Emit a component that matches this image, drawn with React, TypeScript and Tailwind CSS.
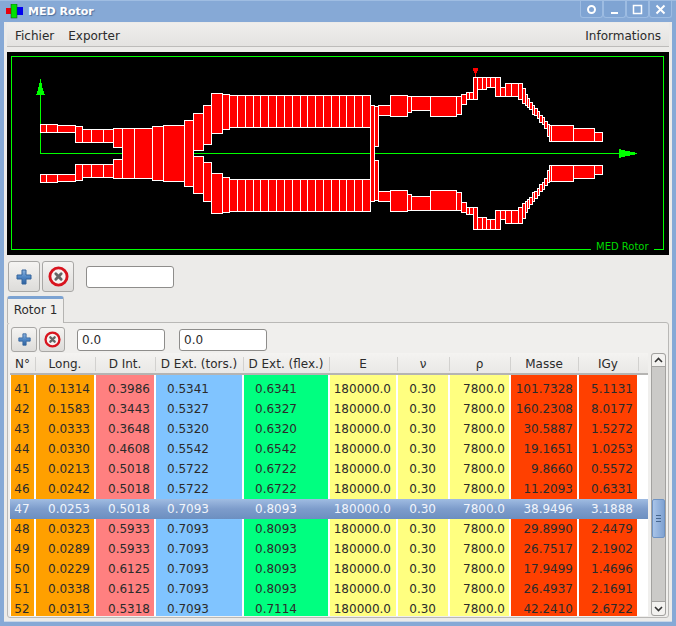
import React from "react";

// [x0, x1, rOut, rIn] one half of each rotor section, mirrored round the axis
const sections: number[][] = [
  [40, 46, 29, 21], [46, 57, 29, 21], [57, 75, 28, 21], [75, 82, 27, 11], [82, 91, 24, 11],
  [91, 103, 24, 11], [103, 113, 24, 11], [113, 122, 25, 6], [122, 134, 25, 0], [134, 152, 25, 0],
  [152, 163, 27, 0], [163, 184, 28, 0], [184, 193, 33, 0], [193, 203, 40, 3], [203, 211, 48, 9],
  [211, 222, 60, 20], [222, 229, 59, 24], [229, 237, 58, 26], [237, 245, 58, 26], [245, 253, 58, 26],
  [253, 260, 58, 26], [260, 268, 58, 26], [268, 276, 58, 26], [276, 284, 58, 26], [284, 292, 58, 26],
  [292, 300, 58, 26], [300, 307, 58, 26], [307, 315, 58, 26], [315, 323, 58, 26], [323, 331, 58, 26],
  [331, 339, 58, 26], [339, 346, 58, 26], [346, 354, 58, 26], [354, 362, 58, 26], [362, 370, 58, 26],
  [370, 374, 48, 0], [374, 378, 47, 7], [378, 390, 48, 38], [390, 407, 58, 37], [407, 411, 57, 41],
  [411, 430, 57, 43], [430, 456, 57, 37], [456, 461, 57, 39], [461, 466, 59, 49], [466, 469, 61, 54],
  [469, 473, 61, 54], [473, 477, 76, 54], [477, 482, 76, 64], [482, 486, 76, 64], [486, 490, 76, 66],
  [490, 495, 76, 66], [495, 500, 76, 57], [500, 505, 66, 57], [505, 511, 70, 57], [511, 518, 70, 57],
  [518, 522, 70, 54], [522, 525, 65, 50], [525, 527, 59, 48], [527, 529, 55, 46], [529, 532, 51, 44],
  [532, 534, 48, 39], [534, 537, 45, 38], [537, 539, 42, 35], [539, 542, 38, 31], [542, 544, 36, 29],
  [544, 547, 32, 25], [547, 549, 29, 17], [549, 551, 28, 12], [551, 573, 28, 12], [573, 594, 25, 12],
  [594, 602, 21, 12],
];

type Row = string[];
const rows: Row[] = [
  ["41", "0.1314", "0.3986", "0.5341", "0.6341", "101.7328", "5.1131"],
  ["42", "0.1583", "0.3443", "0.5327", "0.6327", "160.2308", "8.0177"],
  ["43", "0.0333", "0.3648", "0.5320", "0.6320", "30.5887", "1.5272"],
  ["44", "0.0330", "0.4608", "0.5542", "0.6542", "19.1651", "1.0253"],
  ["45", "0.0213", "0.5018", "0.5722", "0.6722", "9.8660", "0.5572"],
  ["46", "0.0242", "0.5018", "0.5722", "0.6722", "11.2093", "0.6331"],
  ["47", "0.0253", "0.5018", "0.7093", "0.8093", "38.9496", "3.1888"],
  ["48", "0.0323", "0.5933", "0.7093", "0.8093", "29.8990", "2.4479"],
  ["49", "0.0289", "0.5933", "0.7093", "0.8093", "26.7517", "2.1902"],
  ["50", "0.0229", "0.6125", "0.7093", "0.8093", "17.9499", "1.4696"],
  ["51", "0.0338", "0.6125", "0.7093", "0.8093", "26.4937", "2.1691"],
  ["52", "0.0313", "0.5318", "0.7093", "0.7114", "42.2410", "2.6722"],
];

const headers = [
  { label: "N°", w: "w-[23px]" },
  { label: "Long.", w: "w-[58px]" },
  { label: "D Int.", w: "w-[58px]" },
  { label: "D Ext. (tors.)", w: "w-[86px]" },
  { label: "D Ext. (flex.)", w: "w-[84px]" },
  { label: "E", w: "w-[66px]" },
  { label: "ν", w: "w-[50px]" },
  { label: "ρ", w: "w-[59px]" },
  { label: "Masse", w: "w-[66px]" },
  { label: "IGy", w: "w-[58px]" },
];

function RotorPlot() {
  const cy = 153.5;
  return (
    <svg viewBox="7 52 662 203" className="block w-[662px] h-[203px] bg-black shrink-0" shapeRendering="crispEdges">
      <path d="M11.5 249.5V56.5H663.5V249.5H654M590.5 249.5H11.5" fill="none" stroke="#00ff00" />
      <path d="M40.5 95V153.5H630" fill="none" stroke="#00ff00" />
      <polygon points="40.5,79 42,85 43,90 45,95 36,95 38,90 39,85" fill="#00ff00" />
      <polygon points="619,149 623,150 627,151 632,152 637,153 637,154 632,155 627,156 623,157 619,158" fill="#00ff00" />
      {sections.map(([x0, x1, ro, ri], i) => {
        const x = x0 + 0.5;
        const w = x1 - x0;
        if (ri === 0) {
          return <rect key={i} x={x} y={cy - ro} width={w} height={ro * 2} fill="#ff0000" stroke="#ffffff" />;
        }
        return (
          <g key={i}>
            <rect x={x} y={cy - ro} width={w} height={ro - ri} fill="#ff0000" stroke="#ffffff" />
            <rect x={x} y={cy + ri} width={w} height={ro - ri} fill="#ff0000" stroke="#ffffff" />
          </g>
        );
      })}
      <polygon points="473,68 478,68 478,71 477,71 477,73 476,73 476,77 475,77 475,73 474,73 474,71 473,71" fill="#ff0000" />
      <text x="596" y="250" fill="#00d800" fontSize="10" fontFamily="DejaVu Sans" shapeRendering="auto">MED Rotor</text>
    </svg>
  );
}

function PlusIcon({ size }: { size: number }) {
  return (
    <svg width={size} height={size} viewBox="0 0 16 16">
      <defs>
        <linearGradient id="plusFill" x1="0" y1="0" x2="0" y2="1">
          <stop offset="0" stopColor="#8fb4de" />
          <stop offset="0.5" stopColor="#4f86c4" />
          <stop offset="1" stopColor="#2e619f" />
        </linearGradient>
      </defs>
      <path d="M6 1H10V6H15V10H10V15H6V10H1V6H6Z" fill="url(#plusFill)" stroke="#34649c" strokeWidth="1" strokeLinejoin="round" />
    </svg>
  );
}

function DeleteIcon({ size }: { size: number }) {
  return (
    <svg width={size} height={size} viewBox="0 0 22 22">
      <circle cx="11" cy="11" r="9" fill="#f6f4f2" stroke="#d8141e" strokeWidth="3" />
      <path d="M8.2 8.2L13.8 13.8M13.8 8.2L8.2 13.8" stroke="#666666" strokeWidth="3" strokeLinecap="round" />
    </svg>
  );
}

function ToolButton({ w, h, children }: { w: string; h: string; children: React.ReactNode }) {
  return (
    <div className={`${w} ${h} flex items-center justify-center rounded-[3px] border border-[#a8a7a5] bg-gradient-to-b from-[#f5f4f2] to-[#dddcda] shrink-0`}>
      {children}
    </div>
  );
}

function WinButton({ children }: { children: React.ReactNode }) {
  return (
    <div className="w-[23px] h-[17px] flex items-center justify-center rounded-b-[3px] border border-t-0 border-[#9dbce2] bg-[#7fa4d3]">
      {children}
    </div>
  );
}

function DataRow({ row, selected }: { row: Row; selected?: boolean }) {
  const text = selected ? "text-[#f2f5fa]" : "text-[#2b2b2b]";
  const c = (bg: string) => (selected ? "" : bg);
  return (
    <div
      className={`flex gap-[2px] pl-[1px] shrink-0 h-[20px] leading-[20px] ${text} ${
        selected ? "bg-gradient-to-b from-[#a0bce2] via-[#7d9ccb] to-[#6c8fc0]" : ""
      }`}
    >
      <div className={`w-[23px] text-center pr-[1px] ${c("bg-[#ffa000]")}`}>{row[0]}</div>
      <div className={`w-[58px] text-right pr-[4px] ${c("bg-[#ffa000]")}`}>{row[1]}</div>
      <div className={`w-[58px] text-right pr-[4px] ${c("bg-[#ff8080]")}`}>{row[2]}</div>
      <div className={`w-[86px] pl-[11px] ${c("bg-[#80c4ff]")}`}>{row[3]}</div>
      <div className={`w-[84px] pl-[11px] ${c("bg-[#00ff80]")}`}>{row[4]}</div>
      <div className={`w-[66px] text-right pr-[5px] ${c("bg-[#ffff80]")}`}>180000.0</div>
      <div className={`w-[50px] text-right pr-[12px] ${c("bg-[#ffff80]")}`}>0.30</div>
      <div className={`w-[59px] text-right pr-[4px] ${c("bg-[#ffff80]")}`}>7800.0</div>
      <div className={`w-[66px] text-right pr-[4px] ${c("bg-[#ff4000]")}`}>{row[5]}</div>
      <div className={`w-[58px] text-right pr-[4px] ${c("bg-[#ff4000]")}`}>{row[6]}</div>
    </div>
  );
}

// the last few pixels of the row scrolled out above 41
function ClippedRow() {
  return (
    <div className="flex gap-[2px] pl-[1px] h-[4px] shrink-0">
      <div className="w-[23px] bg-[#ffa000]" />
      <div className="w-[58px] bg-[#ffa000]" />
      <div className="w-[58px] bg-[#ff8080]" />
      <div className="w-[86px] bg-[#80c4ff]" />
      <div className="w-[84px] bg-[#00ff80]" />
      <div className="w-[66px] bg-[#ffff80]" />
      <div className="w-[50px] bg-[#ffff80]" />
      <div className="w-[59px] bg-[#ffff80]" />
      <div className="w-[66px] bg-[#ff4000]" />
      <div className="w-[58px] bg-[#ff4000]" />
    </div>
  );
}

function Scrollbar() {
  return (
    <div className="w-[15px] h-[263px] flex flex-col rounded-[3px] border border-[#a3a2a0] bg-[#cbcac8] shrink-0">
      <div className="h-[13px] flex items-center justify-center bg-[#f3f2f0] border-b border-[#a3a2a0] rounded-t-[3px] shrink-0">
        <svg width="9" height="6" viewBox="0 0 9 6"><path d="M1 5L4.5 1.5L8 5" fill="none" stroke="#333" strokeWidth="1.6" /></svg>
      </div>
      <div className="flex-1 flex flex-col">
        <div className="h-[132px] shrink-0" />
        <div className="h-[39px] flex flex-col gap-[2px] items-center justify-center rounded-[2px] border border-[#6e93c4] bg-gradient-to-r from-[#a9c4e8] to-[#7fa2d2] shrink-0">
          <div className="w-[5px] h-[1px] bg-[#46678f]" />
          <div className="w-[5px] h-[1px] bg-[#46678f]" />
          <div className="w-[5px] h-[1px] bg-[#46678f]" />
        </div>
      </div>
      <div className="h-[14px] flex items-center justify-center bg-[#f3f2f0] border-t border-[#a3a2a0] rounded-b-[3px] shrink-0">
        <svg width="9" height="6" viewBox="0 0 9 6"><path d="M1 1L4.5 4.5L8 1" fill="none" stroke="#333" strokeWidth="1.6" /></svg>
      </div>
    </div>
  );
}

export default function App() {
  return (
    <div className="w-[676px] h-[626px] flex flex-col bg-[#86a9d6] overflow-hidden font-['DejaVu_Sans',sans-serif] text-[12px] text-[#2b2b2b]">
      {/* title bar */}
      <div className="h-[22px] flex items-start pl-[6px] pr-[4px] shrink-0 border-t border-[#9fbde2]">
        <svg width="17" height="15" viewBox="0 0 17 15" className="mt-[3px] shrink-0">
          <rect x="0" y="4" width="6" height="6" fill="#e8000c" />
          <rect x="11" y="3" width="6" height="8" fill="#0000f0" />
          <rect x="5" y="0" width="6" height="14" fill="#00e000" stroke="#1a3a1a" strokeWidth="0.5" />
        </svg>
        <div className="ml-[5px] mt-[3px] text-[11px] leading-[16px] font-bold text-white [text-shadow:1px_1px_1px_#4d6f9d]">MED Rotor</div>
        <div className="ml-auto flex">
          <WinButton>
            <svg width="11" height="11" viewBox="0 0 11 11"><circle cx="5.5" cy="5.5" r="3.5" fill="none" stroke="#fff" strokeWidth="2" /></svg>
          </WinButton>
          <WinButton>
            <svg width="11" height="11" viewBox="0 0 11 11"><rect x="2" y="8" width="7" height="2" fill="#fff" /></svg>
          </WinButton>
          <WinButton>
            <svg width="11" height="11" viewBox="0 0 11 11"><rect x="1.5" y="1.5" width="8" height="8" fill="none" stroke="#fff" strokeWidth="1.5" /></svg>
          </WinButton>
          <WinButton>
            <svg width="11" height="11" viewBox="0 0 11 11"><path d="M1.5 1.5L9.5 9.5M9.5 1.5L1.5 9.5" stroke="#fff" strokeWidth="2" /></svg>
          </WinButton>
        </div>
      </div>

      {/* window body */}
      <div className="mx-[4px] mb-[4px] h-[600px] px-[3px] flex flex-col bg-[#ecebe9] border-b border-[#c9d6e8] shrink-0">
        <div className="mt-[1px] h-[24px] flex items-center justify-between pl-[8px] pr-[8px] bg-gradient-to-b from-[#efeeec] to-[#e4e3e1] border-b border-[#bdbcba] shrink-0 pt-[3px]">
          <div className="flex gap-[14px]">
            <span>Fichier</span>
            <span>Exporter</span>
          </div>
          <span>Informations</span>
        </div>

        <div className="mt-[5px] shrink-0">
          <RotorPlot />
        </div>

        <div className="mt-[6px] h-[31px] flex items-center gap-[2px] pl-[1px] shrink-0">
          <ToolButton w="w-[32px]" h="h-[31px]"><PlusIcon size={16} /></ToolButton>
          <ToolButton w="w-[32px]" h="h-[31px]"><DeleteIcon size={21} /></ToolButton>
          <div className="ml-[10px] w-[88px] h-[22px] rounded-[3px] border border-[#8e8d8b] bg-white" />
        </div>

        <div className="mt-[4px] h-[26px] flex shrink-0">
          <div className="w-[57px] h-[27px] rounded-t-[3px] border border-[#b5b4b2] border-t-[3px] border-t-[#7ba2d2] border-b-0 bg-[#f0efed] text-center leading-[22px] z-10">
            Rotor 1
          </div>
        </div>

        <div className="h-[296px] border border-[#b9b8b6] rounded-[3px] bg-[#f0efed] pl-[2px] pr-[2px] shrink-0">
          <div className="mt-[4px] h-[25px] flex items-center gap-[2px] pl-[1px]">
            <ToolButton w="w-[26px]" h="h-[25px]"><PlusIcon size={13} /></ToolButton>
            <ToolButton w="w-[26px]" h="h-[25px]"><DeleteIcon size={17} /></ToolButton>
            <div className="ml-[10px] w-[88px] h-[22px] rounded-[3px] border border-[#8e8d8b] bg-white pl-[4px] leading-[20px]">0.0</div>
            <div className="ml-[12px] w-[88px] h-[22px] rounded-[3px] border border-[#8e8d8b] bg-white pl-[4px] leading-[20px]">0.0</div>
          </div>
          <div className="mt-[1px] flex gap-[3px]">
            <div className="w-[638px] shrink-0 flex flex-col bg-white">
              <div className="h-[22px] flex gap-[2px] pl-[1px] bg-gradient-to-b from-[#f4f3f1] to-[#e9e8e6] border-b-2 border-[#b5b4b2] shrink-0">
                {headers.map((h, i) => (
                  <div key={i} className={`${h.w} relative text-center leading-[23px]`}>
                    {h.label}
                    <div className="absolute right-[-2px] top-[4px] h-[14px] w-[1px] bg-[#d2d1cf]" />
                  </div>
                ))}
              </div>
              <div className="h-[241px] overflow-hidden flex flex-col">
                <ClippedRow />
                {rows.map((r) => (
                  <DataRow key={r[0]} row={r} selected={r[0] === "47"} />
                ))}
              </div>
            </div>
            <Scrollbar />
          </div>
        </div>
      </div>
    </div>
  );
}
